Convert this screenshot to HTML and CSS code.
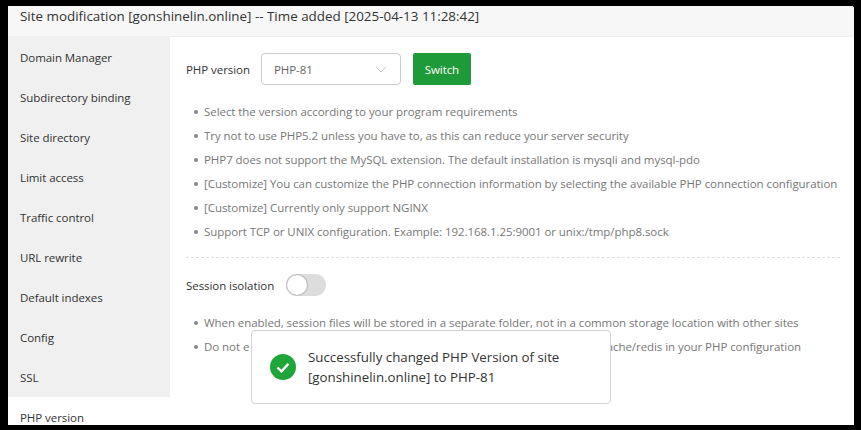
FILE: index.html
```html
<!DOCTYPE html>
<html lang="en">
<head>
  <meta charset="UTF-8">
  <title>Site modification</title>
  <link rel="stylesheet" href="styles.css">
</head>
<body>

  <div class="window">
    <div class="title">Site modification [gonshinelin.online] -- Time added [2025-04-13 11:28:42]</div>

    <div class="main">
      <div class="side">
        <div class="side-item">Domain Manager</div>
        <div class="side-item">Subdirectory binding</div>
        <div class="side-item">Site directory</div>
        <div class="side-item">Limit access</div>
        <div class="side-item">Traffic control</div>
        <div class="side-item">URL rewrite</div>
        <div class="side-item">Default indexes</div>
        <div class="side-item">Config</div>
        <div class="side-item">SSL</div>
        <div class="side-item active">PHP version</div>
      </div>

      <div class="content">
        <div class="row">
          <span class="label">PHP version</span>
          <div class="select">
            <span>PHP-81</span>
            <svg class="arrow" width="12" height="7" viewBox="0 0 12 7"><path d="M1 1l5 5 5-5" fill="none" stroke="#c8c8c8" stroke-width="1"/></svg>
          </div>
          <button class="btn">Switch</button>
        </div>

        <ul class="tips">
          <li>Select the version according to your program requirements</li>
          <li>Try not to use PHP5.2 unless you have to, as this can reduce your server security</li>
          <li>PHP7 does not support the MySQL extension. The default installation is mysqli and mysql-pdo</li>
          <li>[Customize] You can customize the PHP connection information by selecting the available PHP connection configuration</li>
          <li>[Customize] Currently only support NGINX</li>
          <li>Support TCP or UNIX configuration. Example: 192.168.1.25:9001 or unix:/tmp/php8.sock</li>
        </ul>

        <div class="divider"></div>

        <div class="row session">
          <span class="label">Session isolation</span>
          <div class="toggle"><div class="knob"></div></div>
        </div>

        <ul class="tips">
          <li>When enabled, session files will be stored in a separate folder, not in a common storage location with other sites</li>
          <li class="covered"><span>Do not e</span><span>ache/redis in your PHP configuration</span></li>
        </ul>
      </div>
    </div>

    <div class="toast">
      <svg class="toast-icon" width="26" height="26" viewBox="0 0 26 26">
        <circle cx="13" cy="13" r="13" fill="#20a53a"/>
        <path d="M7.5 13.5l4 3.8 7-7.6" fill="none" stroke="#fff" stroke-width="2.4"/>
      </svg>
      <div class="toast-text">Successfully changed PHP Version of site [gonshinelin.online] to PHP-81</div>
    </div>
  </div>

</body>
</html>
```

FILE: styles.css
```css
html, body {
  margin: 0;
  height: 100%;
  overflow: hidden;
}

body {
  background-color: #000;
  box-sizing: border-box;
  padding: 6px 7px 5px 8px;
  font-family: "Open Sans", "Noto Sans", Arial, sans-serif;
  font-size: 11.5px;
  letter-spacing: -0.06px;
  color: #555;
}

.window {
  position: relative;
  height: 100%;
  background: #fff;
  display: flex;
  flex-direction: column;
  overflow: hidden;
  border-top-right-radius: 3px;
}

.title {
  flex: none;
  height: 30px;
  line-height: 20px;
  padding-left: 12px;
  font-size: 13.4px;
  letter-spacing: 0;
  color: #333;
  background: #f7f7f7;
  border-bottom: 1px solid #eee;
}

.main {
  flex: 1;
  display: flex;
  min-height: 0;
}

.side {
  flex: none;
  width: 162px;
}

.side-item {
  height: 40px;
  line-height: 42px;
  padding-left: 12px;
  color: #333;
  background: #f0f0f0;
}

.side-item.active {
  background: #fff;
}

.content {
  flex: 1;
  padding: 16px 14px 0 16px;
}

.row {
  display: flex;
  align-items: center;
}

.label {
  color: #333;
  margin-right: 11px;
}

.select {
  width: 140px;
  height: 32px;
  box-sizing: border-box;
  border: 1px solid #ccc;
  border-radius: 4px;
  padding: 0 13px 0 12px;
  display: flex;
  align-items: center;
  justify-content: space-between;
  color: #666;
}

.btn {
  margin-left: 12px;
  width: 58px;
  height: 32px;
  border: none;
  border-radius: 2px;
  background-color: #1f9a39;
  color: #fff;
  font: inherit;
  letter-spacing: inherit;
  padding: 0;
}

.tips {
  list-style: none;
  margin: 15px 0 0;
  padding: 0 0 0 8px;
}

.tips li {
  height: 24px;
  line-height: 24px;
  padding-left: 10px;
  color: #777;
  white-space: nowrap;
  position: relative;
}

.tips li::before {
  content: "";
  position: absolute;
  left: 0;
  top: 10px;
  width: 4px;
  height: 4px;
  border-radius: 50%;
  background: #888;
}

/* tail of this tip shows past the toast, right edge at x=801 */
.tips li.covered {
  display: flex;
  justify-content: space-between;
  width: 597px;
}

.divider {
  border-top: 1px dashed #ddd;
  margin-top: 13px;
}

.session {
  margin-top: 16px;
}

.session .label {
  margin-right: 12px;
}

.toggle {
  width: 40px;
  height: 22px;
  border-radius: 11px;
  background: #ddd;
}

.knob {
  width: 20px;
  height: 20px;
  margin: 1px;
  border-radius: 50%;
  background: #fff;
  box-shadow: 0 0 2px rgba(0, 0, 0, 0.5);
}

.session + .tips {
  margin-top: 15px;
}

.toast {
  position: absolute;
  left: 243px;
  top: 324px;
  width: 360px;
  height: 74px;
  box-sizing: border-box;
  background: #fff;
  border: 1px solid #d3d3d3;
  border-radius: 4px;
  padding: 0 20px 0 18px;
  display: flex;
  align-items: center;
}

.toast-icon {
  flex: none;
  margin-right: 12px;
}

.toast-text {
  font-size: 13.3px;
  letter-spacing: 0;
  line-height: 20px;
  color: #333;
}
```
